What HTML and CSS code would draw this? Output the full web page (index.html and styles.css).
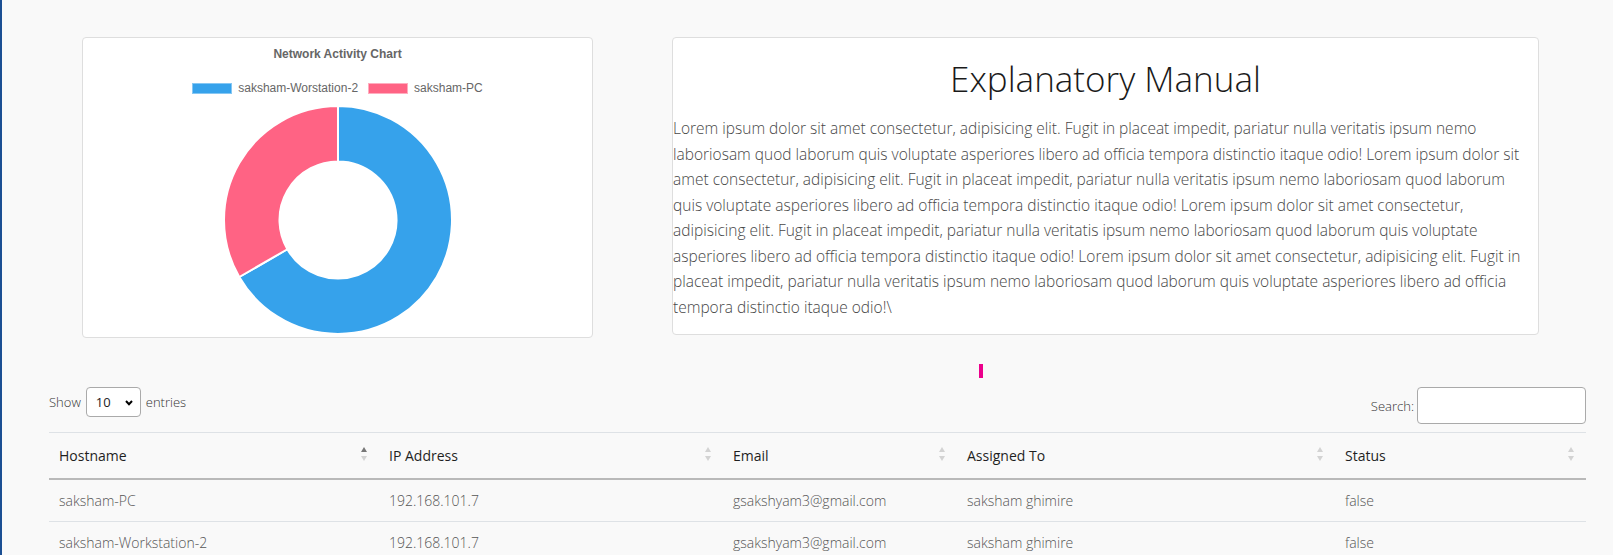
FILE: index.html
```html
<!DOCTYPE html>
<html lang="en">
<head>
<meta charset="utf-8">
<title>Network Dashboard</title>
<link rel="stylesheet" href="styles.css">
</head>
<body>
<div class="top">
  <section class="card chart-card">
    <h3 class="chart-title">Network Activity Chart</h3>
    <div class="legend">
      <span class="legend-item"><i class="swatch swatch-blue"></i>saksham-Worstation-2</span>
      <span class="legend-item"><i class="swatch swatch-pink"></i>saksham-PC</span>
    </div>
    <svg class="donut" width="240" height="236" viewBox="0 0 240 236">
      <path d="M120 6 A114 114 0 1 1 21.27 177 L69.34 149.25 A58.5 58.5 0 1 0 120 61.5 Z" fill="#36a2eb" stroke="#fff" stroke-width="2"/>
      <path d="M21.27 177 A114 114 0 0 1 120 6 L120 61.5 A58.5 58.5 0 0 0 69.34 149.25 Z" fill="#ff6384" stroke="#fff" stroke-width="2"/>
    </svg>
  </section>
  <section class="card manual-card">
    <h1 class="manual-title">Explanatory Manual</h1>
    <p class="manual-text">Lorem ipsum dolor sit amet consectetur, adipisicing elit. Fugit in placeat impedit, pariatur nulla veritatis ipsum nemo<br>laboriosam quod laborum quis voluptate asperiores libero ad officia tempora distinctio itaque odio! Lorem ipsum dolor sit<br>amet consectetur, adipisicing elit. Fugit in placeat impedit, pariatur nulla veritatis ipsum nemo laboriosam quod laborum<br>quis voluptate asperiores libero ad officia tempora distinctio itaque odio! Lorem ipsum dolor sit amet consectetur,<br>adipisicing elit. Fugit in placeat impedit, pariatur nulla veritatis ipsum nemo laboriosam quod laborum quis voluptate<br>asperiores libero ad officia tempora distinctio itaque odio! Lorem ipsum dolor sit amet consectetur, adipisicing elit. Fugit in<br>placeat impedit, pariatur nulla veritatis ipsum nemo laboriosam quod laborum quis voluptate asperiores libero ad officia<br>tempora distinctio itaque odio!\</p>
  </section>
</div>
<div class="loader-row"><span class="loader"></span></div>
<div class="table-wrap">
  <div class="dt-controls">
    <label class="dt-length">Show
      <span class="select-wrap">
        <select class="dt-select"><option>10</option><option>25</option><option>50</option><option>100</option></select>
        <svg class="chevron" width="8" height="6" viewBox="0 0 8 6"><path d="M1 1 L4 4.2 L7 1" fill="none" stroke="#000" stroke-width="2"/></svg>
      </span>
      entries</label>
    <label class="dt-search">Search:<input class="dt-input" type="search"></label>
  </div>
  <table class="dt">
    <thead>
      <tr>
        <th class="col-host sort-asc">Hostname</th>
        <th class="col-ip">IP Address</th>
        <th class="col-email">Email</th>
        <th class="col-assigned">Assigned To</th>
        <th class="col-status">Status</th>
      </tr>
    </thead>
    <tbody>
      <tr>
        <td>saksham-PC</td>
        <td>192.168.101.7</td>
        <td>gsakshyam3@gmail.com</td>
        <td>saksham ghimire</td>
        <td>false</td>
      </tr>
      <tr>
        <td>saksham-Workstation-2</td>
        <td>192.168.101.7</td>
        <td>gsakshyam3@gmail.com</td>
        <td>saksham ghimire</td>
        <td>false</td>
      </tr>
    </tbody>
  </table>
</div>
</body>
</html>
```

FILE: styles.css
```css
* { box-sizing: border-box; }
html, body { margin: 0; }
body {
  background: #f9f9f9;
  border-left: 2px solid #1b4f93;
  min-height: 555px;
  font-family: "Open Sans", "Noto Sans", sans-serif;
  color: #333;
  overflow: hidden;
}

.top {
  display: flex;
  align-items: flex-start;
  gap: 79px;
  padding: 37px 0 0 80px;
}
.card {
  background: #fff;
  border: 1px solid #dedede;
  border-radius: 4px;
}
.chart-card {
  width: 511px;
  padding-bottom: 1px;
  display: flex;
  flex-direction: column;
  align-items: center;
}
.chart-title {
  margin: 10px 0 0;
  font: bold 12px/12px "Liberation Sans", Arial, sans-serif;
  color: #666;
}
.legend {
  margin-top: 22px;
  display: flex;
  gap: 10px;
  font: 12px/12px "Liberation Sans", Arial, sans-serif;
  color: #666;
}
.legend-item {
  display: flex;
  align-items: center;
  gap: 6px;
}
.swatch {
  display: block;
  width: 40px;
  height: 11px;
}
.swatch-blue { background: #36a2eb; border: 1px solid #86c7f3; }
.swatch-pink { background: #ff6384; border: 1px solid #ffadbf; }
.donut {
  display: block;
  margin-top: 6px;
}

.manual-card { width: 867px; }
.manual-title {
  margin: 19px 0 0;
  text-align: center;
  font-weight: 300;
  font-size: 35px;
  line-height: 44px;
  color: #1a1a1a;
}
.manual-text {
  margin: 15px 0 14px;
  font-size: 15.5px;
  line-height: 25.5px;
  font-weight: 300;
  color: #474747;
  white-space: nowrap;
}

.loader-row {
  margin-top: 26px;
  padding-left: 977px;
}
.loader {
  display: block;
  width: 4px;
  height: 14px;
  background: #ec008c;
}

.table-wrap {
  padding: 9px 27px 0 47px;
}
.dt-controls {
  display: flex;
  justify-content: space-between;
  align-items: flex-start;
  font-size: 13px;
  font-weight: 300;
  color: #333;
}
.dt-length {
  display: flex;
  align-items: center;
  gap: 5px;
  height: 30px;
}
.select-wrap {
  position: relative;
  display: block;
}
.dt-select {
  appearance: none;
  -webkit-appearance: none;
  display: block;
  width: 55px;
  height: 30px;
  padding: 0 0 0 9px;
  border: 1px solid #aaa;
  border-radius: 4px;
  background: #fff;
  font: 13px "Open Sans", sans-serif;
  color: #222;
}
.chevron {
  position: absolute;
  right: 8px;
  top: 13px;
}
.dt-search {
  display: flex;
  align-items: center;
  gap: 3px;
  height: 37px;
}
.dt-input {
  width: 169px;
  height: 37px;
  border: 1px solid #aaa;
  border-radius: 4px;
  background: #fff;
}

.dt {
  margin-top: 8px;
  width: 100%;
  border-collapse: collapse;
  table-layout: fixed;
  border-top: 1px solid #dee2e6;
}
.col-host { width: 330px; }
.col-ip { width: 344px; }
.col-email { width: 234px; }
.col-assigned { width: 378px; }
.col-status { width: 251px; }
.dt th {
  position: relative;
  text-align: left;
  padding: 12px 10px;
  font-size: 14px;
  line-height: 21px;
  font-weight: 500;
  color: #1f1f1f;
  border-bottom: 2px solid #b9b9b9;
}
.dt th::before,
.dt th::after {
  content: "";
  position: absolute;
  right: 12px;
  border-left: 3px solid transparent;
  border-right: 3px solid transparent;
}
.dt th::before {
  top: 14px;
  border-bottom: 5px solid #d3d3d3;
}
.dt th::after {
  top: 23px;
  border-top: 5px solid #d3d3d3;
}
.dt th.sort-asc::before { border-bottom-color: #777; }
.dt td {
  padding: 10px;
  font-size: 14px;
  line-height: 21px;
  font-weight: 300;
  color: #555;
  border-bottom: 1px solid #dee2e6;
  white-space: nowrap;
}
```
